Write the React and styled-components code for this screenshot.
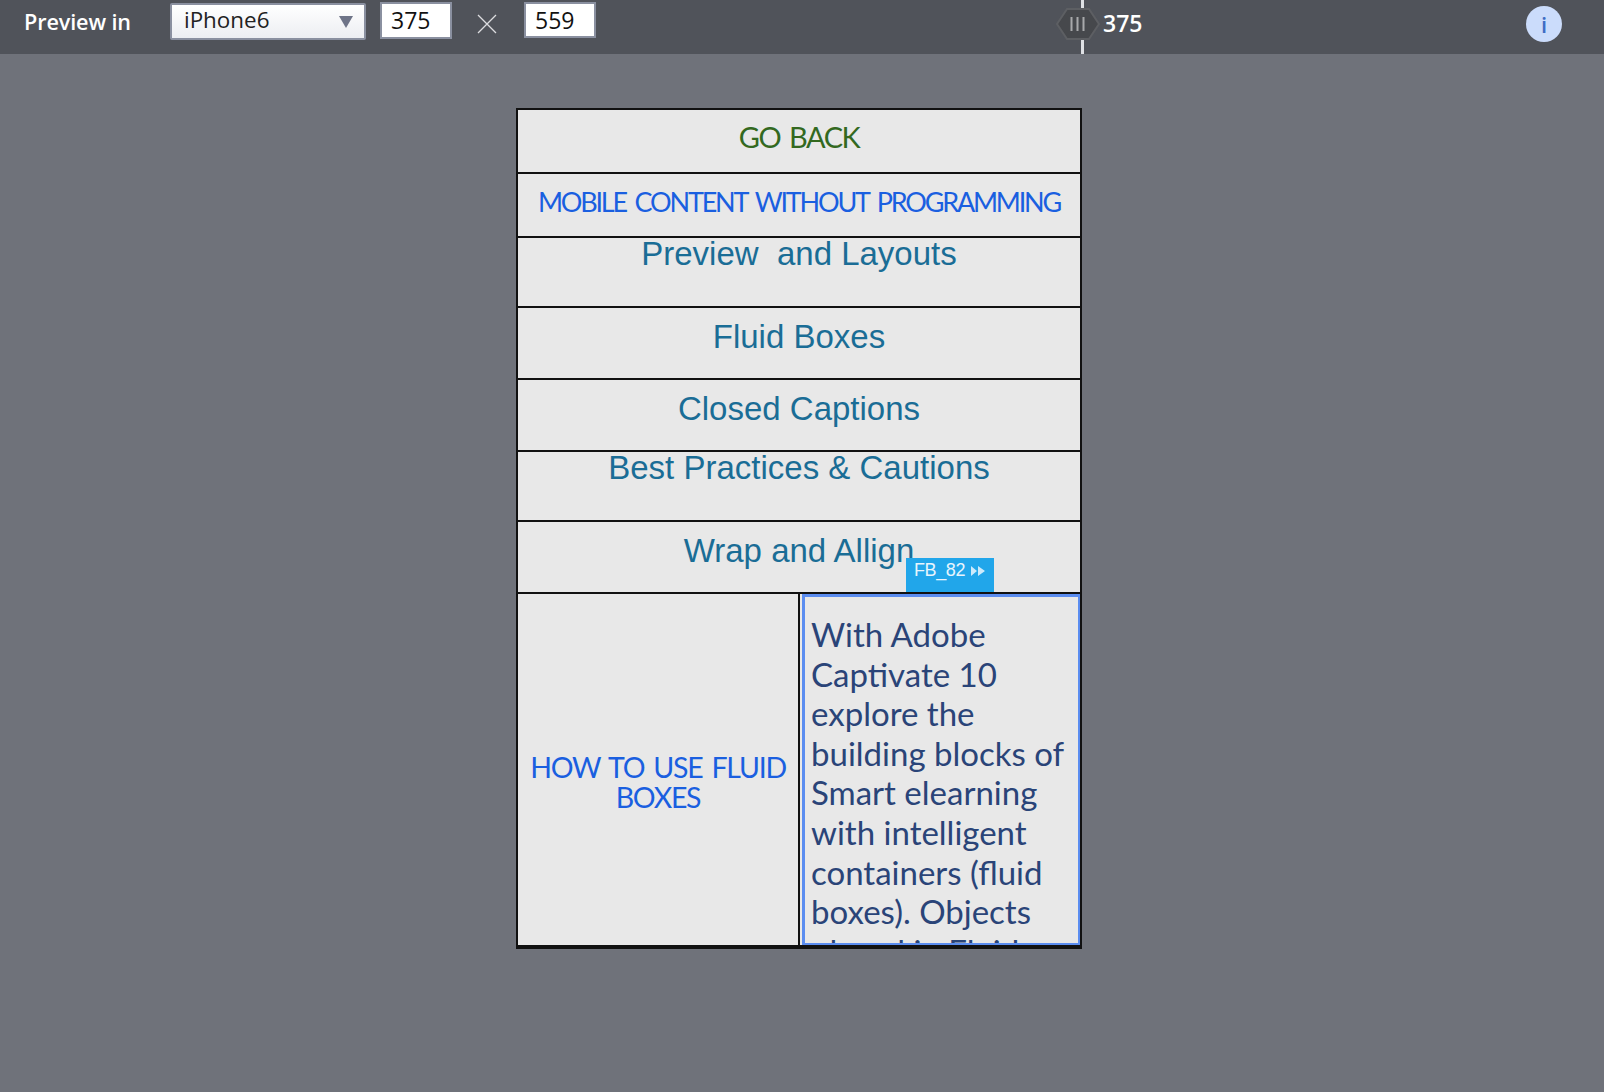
import React from 'react'
import styled, { createGlobalStyle } from 'styled-components'

const GlobalStyle = createGlobalStyle`
  html, body {
    margin: 0;
    padding: 0;
    background: #6f727a;
  }
`

const rows = [
  { label: 'GO BACK', height: 64, kind: 'back' },
  { label: 'MOBILE CONTENT WITHOUT PROGRAMMING', height: 64, kind: 'heading' },
  { label: 'Preview  and Layouts', height: 70, kind: 'link', top: true },
  { label: 'Fluid Boxes', height: 72, kind: 'link' },
  { label: 'Closed Captions', height: 72, kind: 'link' },
  { label: 'Best Practices & Cautions', height: 70, kind: 'link', top: true },
  { label: 'Wrap and Allign', height: 72, kind: 'link' },
]

const kinds = {
  back: 'color: #33691f; font: 29px/1 Lato, sans-serif; letter-spacing: -1.5px; word-spacing: 3px; padding-top: 12px;',
  heading: 'color: #1a5fe0; font: 27px/1 Lato, sans-serif; letter-spacing: -2.2px; word-spacing: 4px; padding-top: 14px;',
  link: 'color: #1a6d96; font: 33px/31px "Liberation Sans", sans-serif; padding-top: 13px;',
}

const Page = styled.div`
  width: 1604px;
  height: 1092px;
  overflow: hidden;
  background: #6f727a;
`

const Toolbar = styled.div`
  height: 54px;
  background: #50535a;
  display: flex;
  align-items: flex-start;
  position: relative;
`

const PreviewLabel = styled.span`
  margin: 9px 0 0 24px;
  width: 146px;
  color: #fff;
  font: 600 21.6px/26px "Open Sans", sans-serif;
  letter-spacing: -0.1px;
`

const DeviceSelect = styled.div`
  box-sizing: border-box;
  width: 196px;
  height: 37px;
  margin-top: 3px;
  padding: 0 11px;
  border: 2px solid #8a90a0;
  border-radius: 2px;
  background: linear-gradient(#fff, #eceef2);
  display: flex;
  align-items: center;
  justify-content: space-between;
  color: #222;
  font: 22.4px/1 "Open Sans", sans-serif;
`

const DeviceName = styled.span`
  margin: -3px 0 0 1px;
`

const Caret = styled.span`
  width: 0;
  height: 0;
  border-left: 7px solid transparent;
  border-right: 7px solid transparent;
  border-top: 12px solid #6e7488;
`

const SizeBox = styled.div`
  box-sizing: border-box;
  width: 72px;
  height: ${props => props.$h}px;
  margin-top: 2px;
  margin-left: ${props => props.$ml}px;
  padding-left: 9px;
  border: 2px solid #8a90a0;
  background: #fff;
  color: #111;
  font: 23px/32px "Open Sans", sans-serif;
`

const Times = styled.svg`
  width: 24px;
  height: 24px;
  margin: 12px 0 0 23px;
`

const Handle = styled.div`
  position: absolute;
  left: 1056px;
  top: 0;
  height: 54px;
  width: 48px;
  display: flex;
  justify-content: center;
`

const HandleLine = styled.div`
  width: 3px;
  height: 54px;
  margin-left: 4px;
  background: #dfe1e5;
`

const HandleKnob = styled.svg`
  position: absolute;
  left: 0;
  top: 8px;
  width: 44px;
  height: 32px;
`

const HandleValue = styled.span`
  position: absolute;
  left: 1103px;
  top: 10px;
  color: #fff;
  font: 600 23px/26px "Open Sans", sans-serif;
`

const InfoButton = styled.div`
  position: absolute;
  left: 1526px;
  top: 6px;
  width: 36px;
  height: 36px;
  border-radius: 50%;
  background: #cbdcfb;
  color: #3e6cc4;
  font: 600 22px/36px "Open Sans", sans-serif;
  text-align: center;
`

const Stage = styled.div`
  width: 566px;
  margin: 54px 0 0 516px;
  box-sizing: border-box;
  border: 2px solid #111;
  border-bottom-width: 4px;
  background: #e8e8e8;
`

const Row = styled.div`
  box-sizing: border-box;
  height: ${props => props.$h}px;
  border-bottom: 2px solid #111;
  text-align: center;
  white-space: pre;
  position: relative;
  ${props => kinds[props.$kind]}
  ${props => props.$top && 'padding-top: 0;'}
`

const Columns = styled.div`
  display: grid;
  grid-template-columns: 282px 1fr;
  height: 351px;
`

const LeftCell = styled.div`
  border-right: 2px solid #111;
  color: #1a5fe0;
  font: 28.5px/30px Lato, sans-serif;
  letter-spacing: -1.25px;
  word-spacing: 3px;
  text-align: center;
  padding: 158px 6px 0;
`

const FluidBox = styled.div`
  box-sizing: border-box;
  margin-left: 2px;
  height: 351px;
  border: 3px solid #5b8df0;
  border-right-width: 2px;
  border-bottom-width: 2px;
  padding: 18px 4px 0 6px;
  overflow: hidden;
  color: #2a4478;
  font: 33px/39.6px Lato, sans-serif;
`

const Tag = styled.div`
  position: absolute;
  left: 388px;
  top: 36px;
  width: 88px;
  height: 34px;
  box-sizing: border-box;
  padding: 1px 0 0 8px;
  background: #21a6ea;
  color: #e8f5fd;
  font: 18px/22px "Liberation Sans", sans-serif;
  letter-spacing: -0.4px;
  display: flex;
  align-items: flex-start;
  gap: 5px;
`

const TagArrows = styled.svg`
  width: 16px;
  height: 12px;
  margin-top: 6px;
`

export default function App() {
  return (
    <Page>
      <GlobalStyle />
      <Toolbar>
        <PreviewLabel>Preview in</PreviewLabel>
        <DeviceSelect>
          <DeviceName>iPhone6</DeviceName>
          <Caret />
        </DeviceSelect>
        <SizeBox $h={37} $ml={14}>375</SizeBox>
        <Times viewBox="0 0 24 24">
          <path d="M3 3 L21 21 M21 3 L3 21" stroke="#dcdde0" strokeWidth="1.3" fill="none" />
        </Times>
        <SizeBox $h={36} $ml={25}>559</SizeBox>
        <Handle>
          <HandleLine />
          <HandleKnob viewBox="0 0 44 32">
            <path d="M1 16 L11 1 H33 L43 16 L33 31 H11 Z" fill="#46484c" stroke="#5d5f63" strokeWidth="2" />
            <path d="M15.5 9 V23 M21.5 9 V23 M27.5 9 V23" stroke="#a8a9ab" strokeWidth="2" />
          </HandleKnob>
        </Handle>
        <HandleValue>375</HandleValue>
        <InfoButton>i</InfoButton>
      </Toolbar>
      <Stage>
        {rows.map(row => (
          <Row key={row.label} $h={row.height} $kind={row.kind} $top={row.top}>
            {row.label}
            {row.label === 'Wrap and Allign' && (
              <Tag>
                FB_82
                <TagArrows viewBox="0 0 16 12">
                  <path d="M1 1 L7 6 L1 11 Z M8 1 L15 6 L8 11 Z" fill="#cdeafb" />
                </TagArrows>
              </Tag>
            )}
          </Row>
        ))}
        <Columns>
          <LeftCell>HOW TO USE FLUID BOXES</LeftCell>
          <FluidBox>
            With Adobe Captivate 10 explore the building blocks of Smart elearning with intelligent containers (fluid boxes). Objects placed in Fluid Boxes
          </FluidBox>
        </Columns>
      </Stage>
    </Page>
  )
}
